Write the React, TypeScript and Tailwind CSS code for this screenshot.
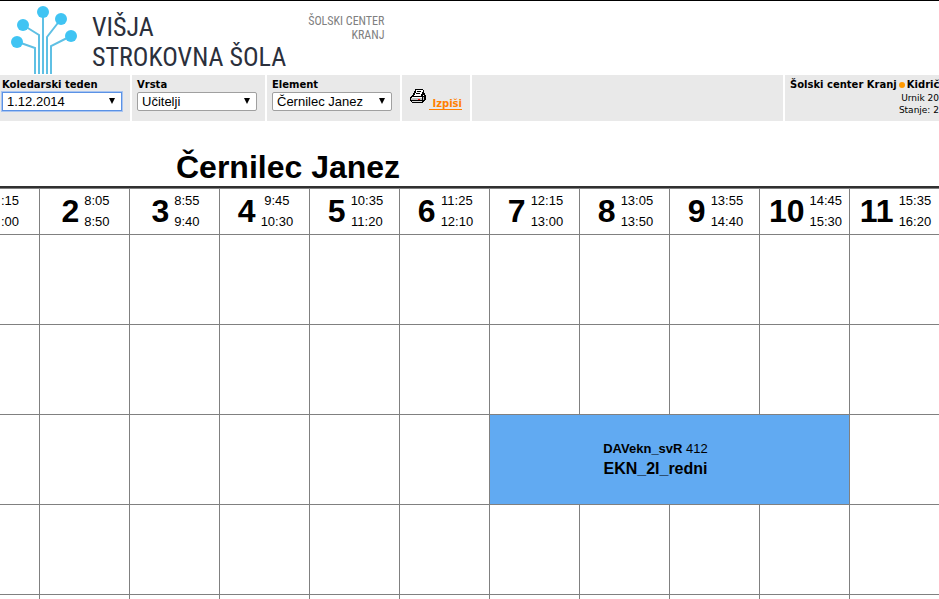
import type { ReactNode } from "react";

interface Period {
  id: number;
  start: string;
  end: string;
}

interface FilterProps {
  id: string;
  label: string;
  options: string[];
  active?: boolean;
}

const periods: Period[] = [
  { id: 2, start: "8:05", end: "8:50" },
  { id: 3, start: "8:55", end: "9:40" },
  { id: 4, start: "9:45", end: "10:30" },
  { id: 5, start: "10:35", end: "11:20" },
  { id: 6, start: "11:25", end: "12:10" },
  { id: 7, start: "12:15", end: "13:00" },
  { id: 8, start: "13:05", end: "13:50" },
  { id: 9, start: "13:55", end: "14:40" },
  { id: 10, start: "14:45", end: "15:30" },
  { id: 11, start: "15:35", end: "16:20" },
];

const days = ["pon", "tor", "sre", "cet", "pet"];

const headCell = "h-[46px] border-r border-b border-[#808080] p-0 pt-px align-top";
const cell = "h-[90px] border-b border-r border-[#808080] p-0";

const Logo = () => (
  <svg viewBox="0 0 70 68" className="h-[68px] w-[70px] shrink-0" fill="none" aria-hidden="true">
    <g stroke="#5fc0e4" strokeWidth="2">
      <path d="M8 36l17 6v26" />
      <path d="M13 19l16 10v39" />
      <path d="M33 6v62" />
      <path d="M51 13L37 31v37" />
      <path d="M61 30L41 40v28" />
    </g>
    <g fill="#40c4f3">
      <circle cx="7" cy="36" r="6" />
      <circle cx="13" cy="19" r="6" />
      <circle cx="33" cy="6" r="6" />
      <circle cx="51" cy="13" r="6" />
      <circle cx="61" cy="30" r="6" />
    </g>
  </svg>
);

const PrinterIcon = () => (
  <svg viewBox="0 0 16 15" className="h-[15px] w-4 shrink-0" shapeRendering="crispEdges" aria-hidden="true">
    <path d="M5 0h8v1h1v3h1v2h1v5h-1v1h-1v1h-1v1H2v-1H1v-1H0V8h1V7h1V6h1V4h1V2h1z" fill="#000" />
    <path d="M6 1h7v2h-1v2h-1v2H4V6h1V4h1z" fill="#fff" />
    <path d="M7 2h4v1H7zM6 4h4v1H6z" fill="#000" />
    <path d="M2 8h10v1H2zM13 6h1v1h-1z" fill="#fff" />
    <path d="M1 9h11v2H1zM13 8h1v3h-1z" fill="#c0c0c0" />
    <path d="M2 12h10v1H2z" fill="#dcdcdc" />
    <path d="M8 10h2v1H8z" fill="#f00" />
  </svg>
);

const Panel = ({ children, className = "" }: { children?: ReactNode; className?: string }) => (
  <div className={`h-[46px] shrink-0 bg-[#e9e9e9] ${className}`}>{children}</div>
);

const Filter = ({ id, label, options, active }: FilterProps) => (
  <Panel className="w-[133px] px-[5px] pt-0.5 first:w-[130px] first:px-0.5">
    <label htmlFor={id} className="block text-[10px] leading-[15px] font-bold">
      {label}
    </label>
    <div className="relative w-[120px]">
      <select
        id={id}
        className={`block h-[19px] w-full appearance-none border bg-white pl-1 font-['Liberation_Sans',sans-serif] text-[13px] leading-4 outline-none ${
          active ? "border-[#5b92e5] ring-1 ring-[#a9c5f1]" : "rounded-xs border-[#a0a0a0]"
        }`}
      >
        {options.map((option) => (
          <option key={option}>{option}</option>
        ))}
      </select>
      <svg viewBox="0 0 6 6" className="pointer-events-none absolute top-1.5 right-[7px] size-1.5" aria-hidden="true">
        <path d="M0 0h6L3 6z" fill="#000" />
      </svg>
    </div>
  </Panel>
);

const Times = ({ start, end }: { start: string; end: string }) => (
  <span className="flex flex-col text-center text-[13px] leading-[21px] font-normal">
    <span>{start}</span>
    <span>{end}</span>
  </span>
);

const Lesson = () => (
  <div className="flex flex-col items-center pr-7 pb-0.5 leading-5">
    <p className="text-[13px]">
      <b>DAVekn_svR</b> 412
    </p>
    <p className="text-base leading-5 font-bold">EKN_2I_redni</p>
  </div>
);

const App = () => (
  <div className="h-screen overflow-hidden bg-white font-['DejaVu_Sans',Verdana,sans-serif] text-black">
    <header className="flex h-[75px] border-t border-black pt-[5px] pl-2.5 font-['Roboto_Condensed',sans-serif]">
      <Logo />
      <div className="ml-3 pt-1.5 text-[26px] leading-[30px] text-[#2b303c]">
        <p>VIŠJA</p>
        <p className="whitespace-nowrap">STROKOVNA ŠOLA</p>
      </div>
      <div className="ml-[22px] pt-2 text-right text-[12px] leading-[14px] text-[#808080]">
        <p>ŠOLSKI CENTER</p>
        <p>KRANJ</p>
      </div>
    </header>

    <nav className="flex gap-0.5 overflow-hidden">
      <Filter id="week" label="Koledarski teden" options={["1.12.2014"]} active />
      <Filter id="kind" label="Vrsta" options={["Učitelji"]} />
      <Filter id="element" label="Element" options={["Černilec Janez"]} />
      <Panel className="flex w-[68px] items-start pt-3.5 pl-2">
        <PrinterIcon />
        <a
          href="#print"
          className="ml-[3px] pt-2 text-[10px] leading-[14px] font-bold whitespace-pre text-[#ff8000] underline underline-offset-2"
        >
          {" Izpiši"}
        </a>
      </Panel>
      <Panel className="min-w-0 shrink! grow" />
      <Panel className="w-[154px] overflow-hidden pt-1 text-right text-[9px] leading-3 whitespace-nowrap">
        <p className="flex items-center pl-[5px] text-[10px] font-bold">
          Šolski center Kranj
          <span className="mx-0.5 size-1.5 shrink-0 rounded-full bg-[#ff9900]" />
          Kidrič
        </p>
        <p className="pt-px">Urnik 20</p>
        <p>Stanje: 2</p>
      </Panel>
    </nav>

    <main className="font-['Liberation_Sans',Arial,sans-serif]">
      <h1 className="pt-7 pl-44 text-[32px] leading-[37px] font-bold">Černilec Janez</h1>
      <div className="border-t-2 border-[#303030]">
        <table className="w-full table-fixed border-separate border-spacing-0 border-t border-[#808080]">
          <colgroup>
            <col className="w-10" />
            {periods.map((p) => (
              <col key={p.id} className={p.id === 11 ? "" : "w-[90px]"} />
            ))}
          </colgroup>
          <thead>
            <tr>
              <th className={headCell}>
                <div className="flex justify-end pr-5">
                  <Times start=":15" end=":00" />
                </div>
              </th>
              {periods.map((p) => (
                <th key={p.id} className={`${headCell} last:border-r-0`}>
                  <div className="flex items-center justify-center gap-[5px] pl-0.5">
                    <span className="text-[32px] leading-10">{p.id}</span>
                    <Times start={p.start} end={p.end} />
                  </div>
                </th>
              ))}
            </tr>
          </thead>
          <tbody>
            {days.map((day) => (
              <tr key={day}>
                <td className={cell} />
                {periods.map((p) => {
                  if (day === "sre" && p.id === 7) {
                    return (
                      <td key={p.id} colSpan={4} className={`${cell} bg-[#61aaf2]`}>
                        <Lesson />
                      </td>
                    );
                  }
                  if (day === "sre" && p.id > 7 && p.id < 11) return null;
                  return <td key={p.id} className={`${cell} last:border-r-0`} />;
                })}
              </tr>
            ))}
          </tbody>
        </table>
      </div>
    </main>
  </div>
);

export default App;
